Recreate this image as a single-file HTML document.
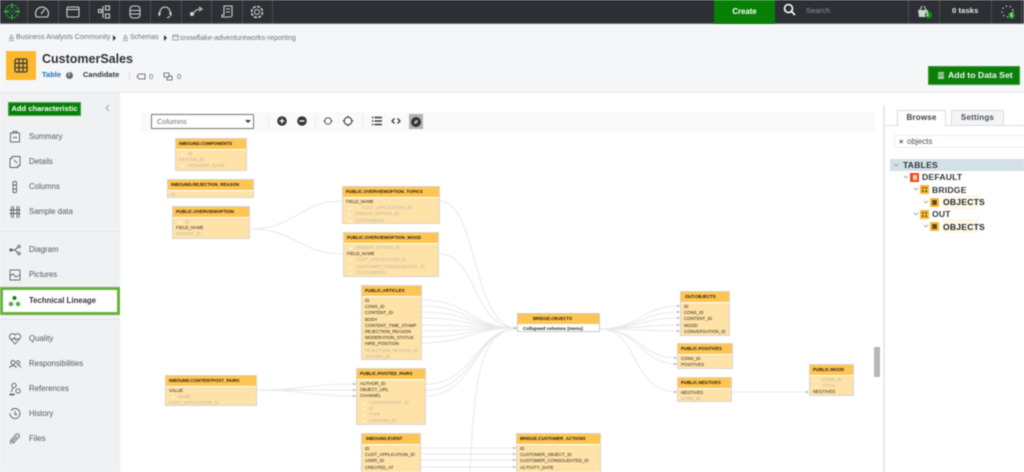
<!DOCTYPE html>
<html><head><meta charset="utf-8"><style>
*{box-sizing:border-box}
html,body{margin:0;padding:0;width:1024px;height:472px;overflow:hidden;background:#fff}
body{font-family:"Liberation Sans",sans-serif;position:relative}
#w{position:absolute;left:0;top:0;width:1024px;height:472px;overflow:hidden;filter:blur(.4px)}
.a{position:absolute;white-space:nowrap}
.nav{left:0;top:0;width:1024px;height:24px;background:#2c2f34;border-bottom:1px solid #6b6d70}
.sp{top:0;width:1px;height:23px;background:#4a4d52}
.ni{top:3px;width:18px;height:18px;fill:none;stroke:#cfd0d2;stroke-width:1.1}
.it{left:29px;font-size:7.8px;color:#55595e;line-height:10px}
.ic{left:8px;width:14px;height:14px;fill:none;stroke:#5d6166;stroke-width:.9}
.t{position:absolute;background:#ffe2a8;border:1px solid #d8d6cf;overflow:hidden;font-size:4.4px;line-height:6.2px;color:#1f1c14}
.h{height:10px;background:#ffc552;font-weight:bold;font-size:4.4px;line-height:10px;padding-left:3px;border-bottom:1px solid #fff;white-space:nowrap;color:#1a170f;box-sizing:content-box}
.r{height:6.2px;padding-left:3px;white-space:nowrap;margin-top:0}
.b{padding-top:1px}
.d{color:#bcb3a3}
.i{padding-left:12px;color:#bcb3a3;position:relative}
.i:before{content:"";position:absolute;left:5px;top:3px;width:3px;height:1px;background:#fff}
.ti{position:absolute;top:115px;width:12px;height:12px}
.tr{font-size:8.6px;font-weight:bold;color:#33373c;line-height:10px;letter-spacing:.2px}
.chev{fill:none;stroke:#9aa0a5;stroke-width:.8}
</style></head><body><div id="w">

<div class="a nav"></div>
<div class="a sp" style="left:27px"></div><div class="a sp" style="left:58px"></div><div class="a sp" style="left:89px"></div><div class="a sp" style="left:119px"></div><div class="a sp" style="left:150px"></div><div class="a sp" style="left:181px"></div><div class="a sp" style="left:211px"></div><div class="a sp" style="left:242px"></div><div class="a sp" style="left:272px"></div>
<div class="a sp" style="left:908px"></div><div class="a sp" style="left:939px"></div><div class="a sp" style="left:991px"></div><div class="a sp" style="left:1021px"></div>

<svg class="a" style="left:3px;top:2px" width="18" height="19" viewBox="0 0 18 19" fill="none" stroke="#2e9a3a" stroke-width="1.4"><circle cx="9" cy="9.500" r="6.500" stroke-dasharray="2 1"/><path d="M1 9.500h5M12 9.500h5M9 1.500v5M9 12.500v5" stroke="#39b54a"/><path d="M6 7l6 5M12 7l-6 5" stroke="#1f7a2c" stroke-width=".7"/></svg>
<svg class="a ni" style="left:33px" viewBox="0 0 18 18"><path d="M3.500 14a6.500 6.500 0 1 1 11 0z"/><path d="M8 11l4-5"/></svg>
<svg class="a ni" style="left:64px" viewBox="0 0 18 18"><rect x="3" y="4" width="12" height="10" rx="1"/><path d="M3 6.500h12"/></svg>
<svg class="a ni" style="left:95px" viewBox="0 0 18 18"><rect x="3.500" y="6.500" width="3" height="3"/><rect x="10.500" y="3" width="4" height="4"/><rect x="10.500" y="11" width="4" height="4"/><path d="M8 3v12"/></svg>
<svg class="a ni" style="left:126px" viewBox="0 0 18 18"><rect x="4" y="3" width="10" height="12" rx="3"/><path d="M4 7.500h10M4 11h10"/></svg>
<svg class="a ni" style="left:156px" viewBox="0 0 18 18"><path d="M4 12V9a5 5 0 0 1 10 0v3"/><path d="M3 9v4M15 9v4"/><path d="M14 13.500l-3 1.500" /></svg>
<svg class="a ni" style="left:187px" viewBox="0 0 18 18"><path d="M4 11c3 0 4-5 9-5"/><circle cx="5" cy="11" r="1.500" fill="#d8d9da"/><path d="M12 4l3 2-3 2"/></svg>
<svg class="a ni" style="left:218px" viewBox="0 0 18 18"><path d="M6 3h8v9a2 2 0 0 1-2 2H4v-2h2zM8 6h4M8 9h4"/></svg>
<svg class="a ni" style="left:248px" viewBox="0 0 18 18"><circle cx="9" cy="9" r="2.500"/><circle cx="9" cy="9" r="5.500" stroke-dasharray="3 1.300" stroke-width="1.600"/></svg>

<div class="a" style="left:714px;top:0;width:61px;height:24px;background:#088008;color:#fff;font-size:7.800px;font-weight:bold;text-align:center;line-height:23px">Create</div>
<svg class="a" style="left:783px;top:3px" width="13" height="13" viewBox="0 0 13 13" fill="none" stroke="#fff" stroke-width="1.600"><circle cx="5.500" cy="5.500" r="4"/><path d="M8.500 8.500l3.500 3.500"/></svg>
<div class="a" style="left:806px;top:5px;font-size:7.600px;color:#8f9296;line-height:11px">Search</div>
<svg class="a" style="left:917px;top:5px" width="16" height="14" viewBox="0 0 16 14"><path d="M1 5h10l-1 7H2z" fill="#d0d1d2"/><path d="M3 5l2-4M9 5L7 1" stroke="#d0d1d2" fill="none"/><circle cx="11.500" cy="10" r="3.600" fill="#118a11"/></svg>
<div class="a" style="left:926px;top:11px;font-size:5.500px;font-weight:bold;color:#fff;line-height:8px">1</div>
<div class="a" style="left:952px;top:5px;font-size:7.600px;font-weight:bold;color:#e8e8e8;line-height:11px;letter-spacing:.1px">0 tasks</div>
<svg class="a" style="left:1000px;top:4px" width="16" height="16" viewBox="0 0 16 16"><circle cx="7.500" cy="7.500" r="5.500" fill="none" stroke="#e0e0e0" stroke-width="1.300" stroke-dasharray="1.200 2.800"/><circle cx="11.500" cy="11.500" r="3.500" fill="#118a11"/></svg>
<div class="a" style="left:1010px;top:11.500px;font-size:5.500px;font-weight:bold;color:#fff;line-height:8px">5</div>

<div class="a" style="left:0;top:24px;width:1024px;height:69px;background:#f5f6f8;border-bottom:1px solid #e6e7e9"></div>
<svg class="a" style="left:8px;top:34px" width="7" height="7" viewBox="0 0 7 7" fill="none" stroke="#888" stroke-width=".7"><path d="M1 6.500h5M3.500 1l2 3.500h-4z"/></svg>
<div class="a" style="left:16px;top:33px;font-size:7.050px;color:#6e7278;line-height:10px">Business Analysts Community</div>
<div class="a" style="left:113px;top:35px;width:0;height:0;border-left:3.500px solid #333;border-top:3px solid transparent;border-bottom:3px solid transparent"></div>
<svg class="a" style="left:122px;top:34px" width="7" height="7" viewBox="0 0 7 7" fill="none" stroke="#888" stroke-width=".7"><path d="M1 6.500h5M3.500 1l2 3.500h-4z"/></svg>
<div class="a" style="left:130px;top:33px;font-size:6.900px;color:#6e7278;line-height:10px">Schemas</div>
<div class="a" style="left:164px;top:35px;width:0;height:0;border-left:3.500px solid #333;border-top:3px solid transparent;border-bottom:3px solid transparent"></div>
<svg class="a" style="left:172px;top:34px" width="7" height="7" viewBox="0 0 7 7" fill="none" stroke="#888" stroke-width=".7"><rect x=".8" y="1" width="5.400" height="5"/><path d="M.8 2.500h5.400"/></svg>
<div class="a" style="left:180px;top:33px;font-size:7.200px;color:#6e7278;line-height:10px">snowflake-adventureworks-reporting</div>

<div class="a" style="left:6px;top:51px;width:30px;height:29px;background:#fdb92e"></div>
<svg class="a" style="left:13px;top:57px" width="16" height="17" viewBox="0 0 16 17" fill="none" stroke="#3d3f42" stroke-width="1.300"><rect x="2" y="2" width="12" height="13" rx="1.500"/><path d="M2 6.300h12M2 10.600h12M6 2v13M10 2v13"/></svg>
<div class="a" style="left:42px;top:50px;font-size:12.500px;font-weight:bold;color:#2e333a;line-height:18px">CustomerSales</div>
<div class="a" style="left:42px;top:70px;font-size:7.500px;font-weight:bold;color:#1b70b8;line-height:10px">Table</div>
<div class="a" style="left:65.500px;top:72px;width:7px;height:7px;border-radius:50%;background:#66696d;color:#fff;font-size:5.500px;line-height:7px;text-align:center;font-weight:bold">i</div>
<div class="a" style="left:83px;top:70px;font-size:7.500px;font-weight:bold;color:#33373c;line-height:10px">Candidate</div>
<div class="a" style="left:129px;top:72px;width:1px;height:8px;background:#dcdde0"></div>
<svg class="a" style="left:136px;top:73px" width="10" height="7" viewBox="0 0 10 7" fill="none" stroke="#555" stroke-width=".8"><path d="M1 3.500L3 1h6v5H3z"/></svg>
<div class="a" style="left:149px;top:72px;font-size:7.500px;color:#666;line-height:10px">0</div>
<svg class="a" style="left:163px;top:72px" width="10" height="9" viewBox="0 0 10 9" fill="none" stroke="#555" stroke-width=".8"><path d="M1 1h5v4H1zM4 5v3h5V4H6"/></svg>
<div class="a" style="left:177px;top:72px;font-size:7.500px;color:#666;line-height:10px">0</div>

<div class="a" style="left:928px;top:66px;width:92px;height:19px;background:#0a800a;border:1px solid #3d9a3d"></div>
<svg class="a" style="left:937px;top:71px" width="8" height="9" viewBox="0 0 8 9" fill="#a9d0a9"><rect x="1" y="1" width="6" height="7"/><path d="M1 3h6M1 5h6" stroke="#0a800a" stroke-width=".5"/></svg>
<div class="a" style="left:948px;top:69px;font-size:8.700px;font-weight:bold;color:#f2f7f2;line-height:13px">Add to Data Set</div>

<!-- sidebar -->
<div class="a" style="left:0;top:93px;width:120px;height:379px;background:#f0f1f3"></div>
<div class="a" style="left:8px;top:102px;width:73px;height:14px;background:#088008;border:1px solid #4da34d;color:#fff;font-size:7.600px;font-weight:bold;line-height:12px;text-align:center">Add characteristic</div>
<svg class="a" style="left:105px;top:104px" width="5" height="8" viewBox="0 0 5 8" fill="none" stroke="#a0a3a6" stroke-width=".9"><path d="M4 1L1 4l3 3"/></svg>

<svg class="a ic" style="top:130px" viewBox="0 0 14 14"><rect x="2.500" y="3" width="9" height="9"/><path d="M5 3V1.500h4V3M5 7.500h4" /></svg>
<div class="a it" style="top:132px">Summary</div>
<svg class="a ic" style="top:155px" viewBox="0 0 14 14"><path d="M4 1.500h8v9H10v2H2v-9h2z"/><path d="M6 5l3 3"/></svg>
<div class="a it" style="top:157px">Details</div>
<svg class="a ic" style="top:180px" viewBox="0 0 14 14"><rect x="5" y="1.500" width="3.500" height="11" rx="1"/><path d="M5 5h3.500M5 9h3.500"/></svg>
<div class="a it" style="top:182px">Columns</div>
<svg class="a ic" style="top:205px" viewBox="0 0 14 14" stroke-width="1.400"><path d="M3.500 1v12M5.500 1v12M9 1v12M11 1v12M1.500 5h11M1.500 8.500h11"/></svg>
<div class="a it" style="top:207px">Sample data</div>
<div class="a" style="left:0;top:231px;width:120px;height:1px;background:#e3e4e6"></div>
<svg class="a ic" style="top:243px" viewBox="0 0 14 14" stroke="#888"><path d="M2 7h5M7 7l3-3M7 7l3 3"/><circle cx="3" cy="7" r="1.200" fill="#777"/><circle cx="11" cy="3.500" r="1.300"/><circle cx="11" cy="10.500" r="1.300"/></svg>
<div class="a it" style="top:245px">Diagram</div>
<svg class="a ic" style="top:268px" viewBox="0 0 14 14"><rect x="2" y="2" width="10" height="10"/><path d="M2 8l3-2 3 3 4-2"/></svg>
<div class="a it" style="top:270px">Pictures</div>

<div class="a" style="left:0;top:287px;width:120px;height:28px;background:#fff;border:3px solid #6ab23f"></div>
<svg class="a" style="left:8px;top:295px" width="13" height="12" viewBox="0 0 13 12"><circle cx="6.500" cy="3" r="2" fill="#0c8a0c"/><circle cx="3" cy="9" r="2.300" fill="#5cad57"/><circle cx="10" cy="9" r="2.300" fill="#5cad57"/></svg>
<div class="a" style="left:29px;top:296px;font-size:7.800px;font-weight:bold;color:#33373c;line-height:10px">Technical Lineage</div>
<div class="a" style="left:0;top:319px;width:120px;height:1px;background:#e3e4e6"></div>

<svg class="a ic" style="top:332px" viewBox="0 0 14 14"><path d="M7 12L2 6.500a3 3 0 0 1 5-3.500 3 3 0 0 1 5 3.500z"/><path d="M3 7h2.500l1-1.500 1 2.500 1-1H11"/></svg>
<div class="a it" style="top:334px">Quality</div>
<svg class="a ic" style="top:357px" viewBox="0 0 14 14" stroke="#666"><circle cx="5" cy="5.500" r="2"/><circle cx="10" cy="5.500" r="1.700"/><path d="M1.500 11c.5-3 6-3 7 0M9.500 8.500c1.500-.5 3 .5 3.500 2"/></svg>
<div class="a it" style="top:359px">Responsibilities</div>
<svg class="a ic" style="top:382px" viewBox="0 0 14 14"><circle cx="6" cy="3.500" r="2.200"/><circle cx="10" cy="9" r="2.200"/><path d="M1.500 12.500h5" stroke-width="1.800"/><path d="M5 6l-2 4"/></svg>
<div class="a it" style="top:384px">References</div>
<svg class="a ic" style="top:407px" viewBox="0 0 14 14"><path d="M3 3.500a5 5 0 1 1-1 3"/><path d="M7 4v3.500h2.500"/></svg>
<div class="a it" style="top:409px">History</div>
<svg class="a ic" style="top:432px" viewBox="0 0 14 14" stroke-width="1.100"><path d="M3 12c-2-2 0-4 1-5l4-4.500c2-1.500 4 .5 3 2.500L6 10.500c-1 1-2.500-.5-1.500-1.500L9 4.500"/></svg>
<div class="a it" style="top:434px">Files</div>

<!-- toolbar -->
<div class="a" style="left:141px;top:112px;width:734px;height:20px;background:#fafafa"></div>
<div class="a" style="left:151px;top:114px;width:103px;height:15px;background:#fff;border:1px solid #76787a;border-radius:1px;font-size:7.500px;color:#6c7075;line-height:13px;padding-left:5px">Columns</div>
<div class="a" style="left:245px;top:120px;width:0;height:0;border-top:3px solid #333;border-left:3px solid transparent;border-right:3px solid transparent"></div>
<div class="a" style="left:268px;top:114px;width:1px;height:15px;background:#ececec"></div>
<div class="a" style="left:315px;top:114px;width:1px;height:15px;background:#ececec"></div>
<div class="a" style="left:362px;top:114px;width:1px;height:15px;background:#ececec"></div>
<svg class="ti" style="left:276px" viewBox="0 0 12 12"><circle cx="6" cy="6" r="4.800" fill="#33373c"/><path d="M3.500 6h5M6 3.500v5" stroke="#fff" stroke-width="1.200"/></svg>
<svg class="ti" style="left:296px" viewBox="0 0 12 12"><circle cx="6" cy="6" r="4.800" fill="#33373c"/><path d="M3.500 6h5" stroke="#fff" stroke-width="1.400"/></svg>
<svg class="ti" style="left:322px" viewBox="0 0 12 12" fill="none" stroke="#555"><circle cx="6" cy="6" r="3.300"/><path d="M1.500 6h1.500M9 6h1.500" stroke-width="1.200"/></svg>
<svg class="ti" style="left:342px" viewBox="0 0 12 12" fill="none" stroke="#444"><circle cx="6" cy="6" r="3.800" stroke-width="1.100"/><path d="M6 .8v2M6 9.200v2M.8 6h2M9.200 6h2" stroke-width="1.200"/></svg>
<svg class="ti" style="left:371px" viewBox="0 0 12 12" stroke="#33373c" stroke-width="1.400"><path d="M3.500 2.500H11M3.500 6H11M3.500 9.500H11M1 2.500h1.400M1 6h1.400M1 9.500h1.400"/></svg>
<svg class="ti" style="left:390px" viewBox="0 0 12 12" fill="none" stroke="#33373c" stroke-width="1.300"><path d="M4.500 3.500L2 6l2.500 2.500M7.500 3.500L10 6 7.500 8.500"/></svg>
<div class="a" style="left:409px;top:114px;width:14px;height:15px;background:#b2b2b2"></div>
<svg class="ti" style="left:410px;top:115.500px" viewBox="0 0 12 12"><circle cx="6" cy="6" r="5" fill="#33373c"/><path d="M8 4L5 5 4 8l3-1z" fill="#ccc"/></svg>

<!-- edges -->
<svg class="a" style="left:0;top:0" width="1024" height="472" viewBox="0 0 1024 472" fill="none" stroke="#e8e8e8" stroke-width="1">
<path d="M250 229C295 229 300 201 342 201M250 229C295 229 300 254 343 254"/>
<path d="M440 201C478 201 472 328 517 328M439 254C478 254 472 328 517 328"/>
<path d="M421 300C470 300 470 328 517 328M421 306C470 306 470 328 517 328M421 312C470 312 470 328 517 328M421 318C470 318 470 328 517 328M421 325C470 325 470 328 517 328M421 331C470 331 470 328 517 328M421 337C470 337 470 328 517 328M421 343C470 343 470 328 517 328"/>
<path d="M426 384C475 384 475 329 517 329M426 390C475 390 475 329 517 329M426 396C475 396 475 329 517 329"/>
<path d="M470 472C474 390 478 329 517 329"/>
<path d="M421 448H516M421 454H516M421 460H516M421 467H516"/>
<path d="M600 329C640 329 640 306 680 306M600 329C640 329 640 312 680 312M600 329C640 329 640 318 680 318M600 329C640 329 640 325 680 325M600 329C640 329 640 331 680 331"/>
<path d="M600 329C640 329 640 358 677 358M600 329C640 329 640 364 677 364M600 329C640 329 630 392 677 392"/>
<path d="M732 392H809"/>
<path d="M257 390C305 390 305 384 356 384M257 390H356M257 390C305 390 305 396 356 396"/>
<g fill="#bbb" stroke="none">
<path d="M342 199.500l3 1.500-3 1.500zM514 326.500l3 1.500-3 1.500zM353 382.500l3 1.500-3 1.500zM353 388.500l3 1.500-3 1.500zM353 394.500l3 1.500-3 1.500zM677 304.500l3 1.500-3 1.500zM677 310.500l3 1.500-3 1.500zM677 316.500l3 1.500-3 1.500zM677 323.500l3 1.500-3 1.500zM677 329.500l3 1.500-3 1.500zM674 356.500l3 1.500-3 1.500zM674 362.500l3 1.500-3 1.500zM674 390.500l3 1.500-3 1.500zM806 390.500l3 1.500-3 1.500zM513 446.500l3 1.500-3 1.500zM513 452.500l3 1.500-3 1.500zM513 458.500l3 1.500-3 1.500zM513 465.500l3 1.500-3 1.500z"/>
</g></svg>

<!-- tables -->
<div class="t" style="left:175px;top:138px;width:72px;height:33px"><div class="h">INBOUND.COMPONENTS</div><div class="b"><div class="r i">ID</div><div class="r d">SYSTEM_ID</div><div class="r i">FOUNDER_NAME</div></div></div>
<div class="t" style="left:167px;top:179px;width:87px;height:19px"><div class="h">INBOUND.REJECTION_REASON</div><div class="b"><div class="r d">ID</div></div></div>
<div class="t" style="left:172px;top:206px;width:78px;height:33px"><div class="h">PUBLIC.OVERVIEWOPTION</div><div class="b"><div class="r i">ID</div><div class="r">FIELD_NAME</div><div class="r d">INSIGHT_ID</div></div></div>
<div class="t" style="left:342px;top:186px;width:98px;height:38px"><div class="h">PUBLIC.OVERVIEWOPTION_TOPICS</div><div class="b"><div class="r">FIELD_NAME</div><div class="r i" style="padding-left:19px">CUST_APPLICATION_ID</div><div class="r i">INSIGHT_OPTION_ID</div><div class="r i">CUSTOMERID</div></div></div>
<div class="t" style="left:343px;top:232px;width:96px;height:45px"><div class="h">PUBLIC.OVERVIEWOPTION_MOOD</div><div class="b"><div class="r i">INSIGHT_OPTION_ID</div><div class="r">FIELD_NAME</div><div class="r i">CUST_APPLICATION_ID</div><div class="r i">CUSTOMER_CONSOLIDATED_ID</div><div class="r i">CUSTOMERID</div></div></div>
<div class="t" style="left:361px;top:285px;width:61px;height:75px"><div class="h">PUBLIC.ARTICLES</div><div class="b"><div class="r">ID</div><div class="r">CONS_ID</div><div class="r">CONTENT_ID</div><div class="r">BODY</div><div class="r">CONTENT_TIME_STAMP</div><div class="r">REJECTION_REASON</div><div class="r">MODERATION_STATUS</div><div class="r">HIRE_POSITION</div><div class="r d">REJECTION_REASON_ID</div><div class="r d">SYSTEM_ID</div></div></div>
<div class="t" style="left:517px;top:313px;width:83px;height:19px;background:#fff;border-color:#c9c9c9"><div class="h" style="padding-left:15px">BRIDGE.OBJECTS</div><div class="r" style="padding-top:1px;padding-left:5px;font-weight:bold;font-size:4.700px;color:#222">Collapsed columns (menu)</div></div>
<div class="t" style="left:680px;top:291px;width:50px;height:45px"><div class="h" style="padding-left:4px">OUT.OBJECTS</div><div class="b"><div class="r">ID</div><div class="r">CONS_ID</div><div class="r">CONTENT_ID</div><div class="r">MOOD</div><div class="r">CONVERSATION_ID</div></div></div>
<div class="t" style="left:677px;top:343px;width:56px;height:26px"><div class="h">PUBLIC.POSITIVES</div><div class="b"><div class="r">CONS_ID</div><div class="r">POSITIVES</div></div></div>
<div class="t" style="left:677px;top:377px;width:55px;height:25px"><div class="h">PUBLIC.NEGTIVES</div><div class="b"><div class="r">NEGTIVES</div><div class="r d">CONS_ID</div></div></div>
<div class="t" style="left:809px;top:364px;width:45px;height:32px"><div class="h">PUBLIC.MOOD</div><div class="b"><div class="r i">CONS_ID</div><div class="r i">TOTAL</div><div class="r">NEGTIVES</div></div></div>
<div class="t" style="left:165px;top:375px;width:92px;height:31px"><div class="h">INBOUND.CONTENTPOST_PAIRS</div><div class="b"><div class="r">VALUE</div><div class="r i">NAME</div><div class="r d">CUST_APPLICATION_ID</div></div></div>
<div class="t" style="left:356px;top:368px;width:70px;height:57px"><div class="h">PUBLIC.PIVOTED_PAIRS</div><div class="b"><div class="r">AUTHOR_ID</div><div class="r">OBJECT_URL</div><div class="r">CHANNEL</div><div class="r i">CONTENTPOST_ID</div><div class="r i">ID</div><div class="r i">TYPE</div><div class="r i">LINKEDIN_ID</div></div></div>
<div class="t" style="left:361px;top:433px;width:60px;height:45px"><div class="h" style="padding-left:4px">INBOUND.EVENT</div><div class="b"><div class="r">ID</div><div class="r">CUST_APPLICATION_ID</div><div class="r">USER_ID</div><div class="r">CREATED_AT</div><div class="r">TOPIC_VIEW</div></div></div>
<div class="t" style="left:516px;top:433px;width:85px;height:45px"><div class="h">BRIDGE.CUSTOMER_ACTIONS</div><div class="b"><div class="r">ID</div><div class="r">CUSTOMER_OBJECT_ID</div><div class="r">CUSTOMER_CONSOLIDATED_ID</div><div class="r">ACTIVITY_DATE</div><div class="r">STATUS</div></div></div>

<div class="a" style="left:874px;top:347px;width:6px;height:30px;background:#b6b6b6"></div>

<!-- right panel -->
<div class="a" style="left:883px;top:105px;width:2px;height:367px;background:#e8e8e8"></div>
<div class="a" style="left:886px;top:125px;width:138px;height:1px;background:#dcdcdc"></div>
<div class="a" style="left:897px;top:110px;width:49px;height:16px;background:#fff;border:1px solid #dcdcdc;border-bottom:0;font-size:8px;font-weight:bold;color:#3e4247;text-align:center;line-height:14px;letter-spacing:.2px">Browse</div>
<div class="a" style="left:951px;top:110px;width:53px;height:15px;background:#f3f4f5;border:1px solid #dcdcdc;border-bottom:0;font-size:8px;font-weight:bold;color:#4e5257;text-align:center;line-height:14px;letter-spacing:.2px">Settings</div>
<div class="a" style="left:894px;top:135px;width:131px;height:13px;border:1px solid #ececec;background:#fff"></div>
<div class="a" style="left:899px;top:136px;font-size:7.500px;font-weight:bold;color:#444;line-height:11px">×</div>
<div class="a" style="left:907px;top:136px;font-size:8px;color:#4a4e53;line-height:11px">objects</div>

<div class="a" style="left:890px;top:159px;width:134px;height:12px;background:#d3e0e5"></div>
<svg class="a" style="left:893px;top:162px" width="6" height="6" viewBox="0 0 6 6"><path class="chev" d="M.8 1.800L3 4l2.200-2.200"/></svg>
<div class="a tr" style="left:903px;top:160px">TABLES</div>
<svg class="a" style="left:903px;top:174px" width="6" height="6" viewBox="0 0 6 6"><path class="chev" d="M.8 1.800L3 4l2.200-2.200"/></svg>
<div class="a" style="left:910px;top:173px;width:9px;height:9px;background:#ea4a2a"></div><div class="a" style="left:912.500px;top:175px;width:4px;height:5px;background:#f7d9a8"></div>
<div class="a tr" style="left:922px;top:172px">DEFAULT</div>
<svg class="a" style="left:913px;top:186px" width="6" height="6" viewBox="0 0 6 6"><path class="chev" d="M.8 1.800L3 4l2.200-2.200"/></svg>
<svg class="a" style="left:920px;top:185px" width="9" height="9" viewBox="0 0 9 9"><rect width="9" height="9" fill="#fdb92e"/><path d="M2 2h1.700v1.700H2zM5.300 2H7v1.700H5.300zM2 5.300h1.700V7H2zM5.300 5.300H7V7H5.300z" fill="#5a4a2a"/></svg>
<div class="a tr" style="left:932px;top:184.500px">BRIDGE</div>
<svg class="a" style="left:923px;top:199px" width="6" height="6" viewBox="0 0 6 6"><path class="chev" d="M.8 1.800L3 4l2.200-2.200"/></svg>
<svg class="a" style="left:930px;top:197.500px" width="9" height="9" viewBox="0 0 9 9"><rect width="9" height="9" fill="#fdb92e"/><rect x="2.200" y="2" width="4.600" height="5" fill="#5a4a2a"/></svg>
<div class="a" style="left:942px;top:195px;width:37px;height:14px;background:#fff8e8"></div>
<div class="a tr" style="left:943px;top:197px;color:#22252a">OBJECTS</div>
<svg class="a" style="left:913px;top:211px" width="6" height="6" viewBox="0 0 6 6"><path class="chev" d="M.8 1.800L3 4l2.200-2.200"/></svg>
<svg class="a" style="left:920px;top:210px" width="9" height="9" viewBox="0 0 9 9"><rect width="9" height="9" fill="#fdb92e"/><path d="M2 2h1.700v1.700H2zM5.300 2H7v1.700H5.300zM2 5.300h1.700V7H2zM5.300 5.300H7V7H5.300z" fill="#5a4a2a"/></svg>
<div class="a tr" style="left:932px;top:209px">OUT</div>
<svg class="a" style="left:923px;top:223px" width="6" height="6" viewBox="0 0 6 6"><path class="chev" d="M.8 1.800L3 4l2.200-2.200"/></svg>
<svg class="a" style="left:930px;top:222px" width="9" height="9" viewBox="0 0 9 9"><rect width="9" height="9" fill="#fdb92e"/><rect x="2.200" y="2" width="4.600" height="5" fill="#5a4a2a"/></svg>
<div class="a" style="left:942px;top:219px;width:37px;height:14px;background:#fff8e8"></div>
<div class="a tr" style="left:943px;top:221.500px;color:#22252a">OBJECTS</div>

</div></body></html>
